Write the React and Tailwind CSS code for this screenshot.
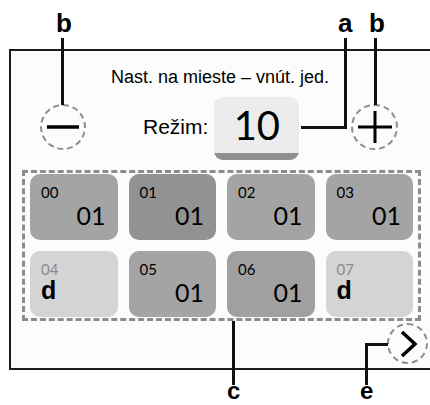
const tiles = [
  { id: '00', value: '01', tone: 'bg-[#a4a4a4]' },
  { id: '01', value: '01', tone: 'bg-[#929292]' },
  { id: '02', value: '01', tone: 'bg-[#a4a4a4]' },
  { id: '03', value: '01', tone: 'bg-[#a4a4a4]' },
  { id: '04', value: 'd', tone: 'bg-[#d4d4d4]', off: true },
  { id: '05', value: '01', tone: 'bg-[#a4a4a4]' },
  { id: '06', value: '01', tone: 'bg-[#a0a0a0]' },
  { id: '07', value: 'd', tone: 'bg-[#d4d4d4]', off: true },
];

const digitFont = "font-['Lato','Noto_Sans',sans-serif] font-normal";

const Tile = ({ id, value, tone, off }) => (
  <div className={`${tone} h-[66px] rounded-[10px] flex flex-col px-[11px] pt-[9px]`}>
    <span className={`${digitFont} text-[15px] leading-[18px] ${off ? 'text-[#8a8a8a]' : 'text-black'}`}>{id}</span>
    {off ? (
      <span className="font-['Liberation_Sans',Arial,sans-serif] font-bold text-[25px] leading-[26px] text-black -mt-[1px]">
        {value}
      </span>
    ) : (
      <span className={`${digitFont} self-end mr-[1px] text-[25px] leading-[28px] text-black`}>{value}</span>
    )}
  </div>
);

const DashedCircle = ({ size, children }) => (
  <div
    className={`${size} rounded-full border-[2.5px] border-dashed border-[#8e8e8e] flex items-center justify-center shrink-0`}
  >
    {children}
  </div>
);

const App = () => {
  return (
    <div className="relative w-[430px] h-[405px] overflow-hidden bg-white font-['Liberation_Sans',Arial,sans-serif] text-black">
      <div className="pt-[49px] pl-[9px]">
        <div className="w-[423px] h-[321px] border-2 border-r-0 border-[#1c1c1c] bg-[#fcfcfc] flex flex-col">
          <p className="mt-[15px] pl-[100px] text-[18px] leading-[22px]">Nast. na mieste – vnút. jed.</p>

          <div className="mt-[16px] h-[46px] flex items-center">
            <div className="ml-[29px]">
              <DashedCircle size="w-[46px] h-[46px]">
                <svg width="32" height="4" viewBox="0 0 32 4">
                  <line x1="0" y1="2" x2="32" y2="2" stroke="#000" strokeWidth="3.5" />
                </svg>
              </DashedCircle>
            </div>
            <span className="ml-[57px] text-[21px] leading-[24px]">Režim:</span>
            <div className="ml-[6px] mt-[3px] w-[85px] h-[63px] rounded-[9px] overflow-hidden bg-[#ececec] flex flex-col">
              <div className={`flex-1 flex items-center justify-center ${digitFont} text-[40px] leading-none`}>10</div>
              <div className="h-[7px] bg-[#8f8f8f]" />
            </div>
            <div className="ml-[52px]">
              <DashedCircle size="w-[47px] h-[46px]">
                <svg width="34" height="32" viewBox="0 0 34 32">
                  <line x1="0" y1="16" x2="34" y2="16" stroke="#000" strokeWidth="3" />
                  <line x1="17" y1="0" x2="17" y2="32" stroke="#000" strokeWidth="3" />
                </svg>
              </DashedCircle>
            </div>
          </div>

          <div className="mt-[20px] ml-[11px] w-[399px] h-[151px] border-[3px] border-dashed border-[#8c8c8c] px-[5px] pt-[1px] grid grid-cols-4 gap-x-[11px] gap-y-[11px] content-start">
            {tiles.map((t) => (
              <Tile key={t.id} {...t} />
            ))}
          </div>

          <div className="self-end mt-[2px] mr-[4px]">
            <DashedCircle size="w-[41px] h-[41px]">
              <svg width="18" height="28" viewBox="0 0 18 28" className="ml-[3px]">
                <polyline points="2,2 15,14 2,26" fill="none" stroke="#000" strokeWidth="3.5" />
              </svg>
            </DashedCircle>
          </div>
        </div>
      </div>

      {/* callouts */}
      <span className="absolute left-[56px] top-[10px] text-[26px] leading-[26px] font-bold">b</span>
      <div className="absolute left-[61px] top-[38px] w-[3px] h-[67px] bg-[#111]" />

      <span className="absolute left-[338px] top-[10px] text-[26px] leading-[26px] font-bold">a</span>
      <div className="absolute left-[344px] top-[38px] w-[3px] h-[91px] bg-[#111]" />
      <div className="absolute left-[301px] top-[126px] w-[46px] h-[3px] bg-[#111]" />

      <span className="absolute left-[369px] top-[10px] text-[26px] leading-[26px] font-bold">b</span>
      <div className="absolute left-[374px] top-[38px] w-[3px] h-[67px] bg-[#111]" />

      <div className="absolute left-[232px] top-[321px] w-[3px] h-[64px] bg-[#111]" />
      <span className="absolute left-[227px] top-[381px] text-[24px] leading-[20px] font-bold">c</span>

      <div className="absolute left-[365px] top-[343px] w-[3px] h-[42px] bg-[#111]" />
      <div className="absolute left-[365px] top-[343px] w-[23px] h-[3px] bg-[#111]" />
      <span className="absolute left-[360px] top-[381px] text-[24px] leading-[20px] font-bold">e</span>
    </div>
  );
};

export default App;
